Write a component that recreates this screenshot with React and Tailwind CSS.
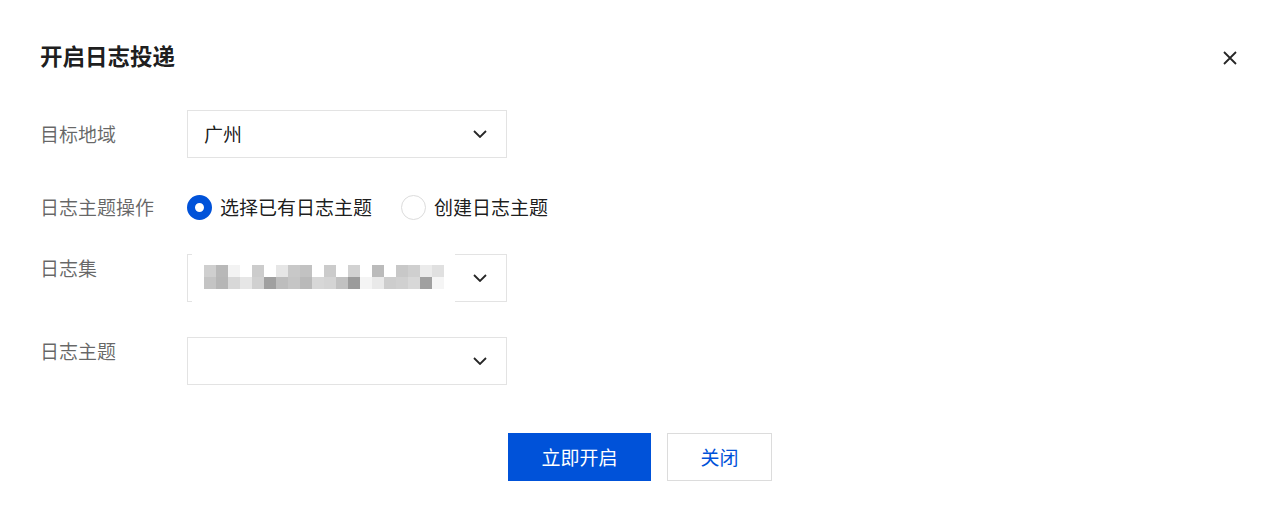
const mosaicTop = ["#cfcfcf", "#b8b8b8", "#f3f3f3", "#ffffff", "#cccccc", "#ffffff", "#e6e6e6", "#c8c8c8", "#c2c2c2", "#ffffff", "#cbcbcb", "#ffffff", "#d2d2d2", "#ffffff", "#bbbbbb", "#ffffff", "#c8c8c8", "#cfcfcf", "#ebebeb", "#e0e0e0"];
const mosaicBottom = ["#c4c4c4", "#b6b6b6", "#d8d8d8", "#e6e6e6", "#d0d0d0", "#a0a0a0", "#bdbdbd", "#c5c5c5", "#b9b9b9", "#d7d7d7", "#d4d4d4", "#c1c1c1", "#9b9b9b", "#f4f4f4", "#e9e9e9", "#cdcdcd", "#d0d0d0", "#d8d8d8", "#a0a0a0", "#f5f5f5"];

function Chevron() {
  return (
    <svg width="14" height="8" viewBox="0 0 14 8" fill="none" className="shrink-0">
      <path d="M1 1l6 6 6-6" stroke="rgba(0,0,0,0.85)" strokeWidth="1.8" />
    </svg>
  );
}

function Select({ value, children }) {
  return (
    <div className="relative flex h-12 w-[320px] items-center justify-between border border-[#e3e3e3] bg-white pl-4 pr-[19px]">
      <span className="text-[19px] text-black/90">{value}</span>
      <Chevron />
      {children}
    </div>
  );
}

function Mosaic() {
  return (
    <div className="absolute left-[4px] top-[-2px] h-[52px] w-[263px] bg-white pl-3 pt-3">
      {[mosaicTop, mosaicBottom].map((row, r) => (
        <div key={r} className="flex">
          {row.map((c, i) => (
            <div key={i} className="h-3 w-3" style={{ backgroundColor: c }} />
          ))}
        </div>
      ))}
    </div>
  );
}

function Label({ children, top }) {
  return (
    <div className={`w-[147px] shrink-0 text-[19px] text-black/60 ${top ? "leading-[28px]" : ""}`}>
      {children}
    </div>
  );
}

export default function App() {
  return (
    <div className="h-[518px] w-[1278px] bg-white font-['Noto_Sans_CJK_SC','Noto_Sans',sans-serif]">
      <div className="flex items-center justify-between pl-10 pr-10 pt-[39px]">
        <h1 className="text-[22.5px] font-bold leading-8 text-black/90">开启日志投递</h1>
        <svg width="16" height="16" viewBox="0 0 16 16" className="mt-[6px]">
          <path d="M2 2l12 12M14 2L2 14" stroke="rgba(0,0,0,0.85)" strokeWidth="1.8" />
        </svg>
      </div>

      <div className="mt-[39px] flex flex-col pl-10">
        <div className="flex items-center">
          <Label>目标地域</Label>
          <Select value="广州" />
        </div>

        <div className="mt-[36px] flex h-[26px] items-center">
          <Label>日志主题操作</Label>
          <label className="flex items-center">
            <span className="h-[25px] w-[25px] rounded-full border-[8px] border-[#0052d9] bg-white" />
            <span className="ml-2 text-[19px] text-black/90">选择已有日志主题</span>
          </label>
          <label className="ml-[29px] flex items-center">
            <span className="h-[25px] w-[25px] rounded-full border border-[#dcdcdc] bg-white" />
            <span className="ml-2 text-[19px] text-black/90">创建日志主题</span>
          </label>
        </div>

        <div className="mt-[34px] flex items-start">
          <Label top>日志集</Label>
          <Select value="">
            <Mosaic />
          </Select>
        </div>

        <div className="mt-[35px] flex items-start">
          <Label top>日志主题</Label>
          <Select value="" />
        </div>
      </div>

      <div className="mt-[48px] flex justify-center gap-4 pl-[2px]">
        <button className="h-12 w-[143px] bg-[#0052d9] text-[19px] text-white">立即开启</button>
        <button className="h-12 w-[105px] border border-[#dcdcdc] bg-white text-[19px] text-[#0052d9]">关闭</button>
      </div>
    </div>
  );
}
